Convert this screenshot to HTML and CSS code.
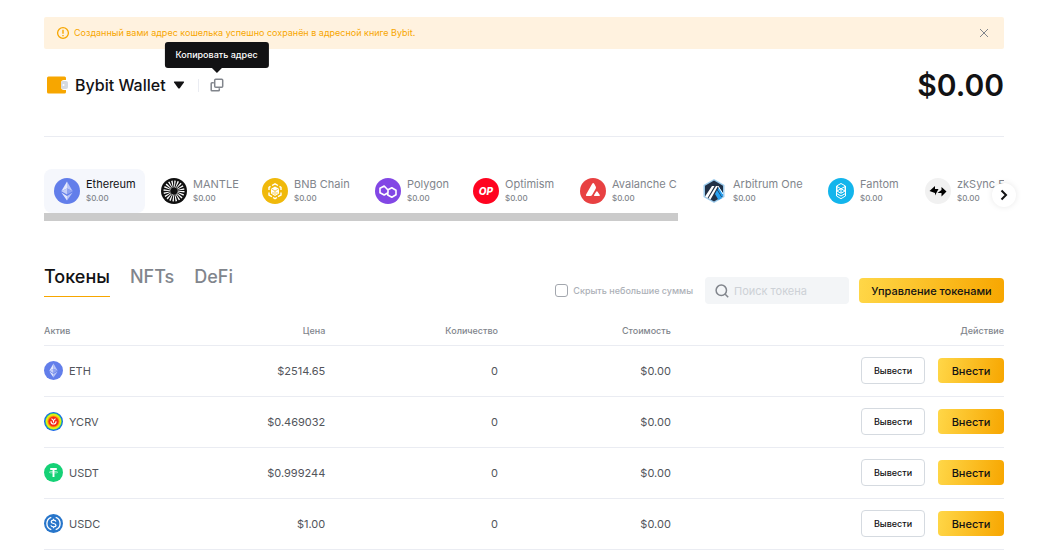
FILE: index.html
```html
<!DOCTYPE html>
<html lang="ru">
<head>
<meta charset="utf-8">
<title>Bybit Wallet</title>
<link rel="stylesheet" href="styles.css">
</head>
<body>
<svg class="sprite" aria-hidden="true">
  <symbol id="eth" viewBox="0 0 26 26">
    <circle cx="13" cy="13" r="13" fill="#627eea"/>
    <path d="M13 3.5 7.3 13.2 13 10.600z" fill="#e3e8fc"/><path d="M13 3.500 18.700 13.200 13 10.600z" fill="#b9c5f7"/>
    <path d="M7.300 13.200 13 10.600V16.600z" fill="#c5cff8"/><path d="M18.700 13.200 13 10.600V16.600z" fill="#8fa2f0"/>
    <path d="M7.300 14.500 13 17.900V22.500z" fill="#e3e8fc"/><path d="M18.700 14.500 13 17.900V22.500z" fill="#b9c5f7"/>
  </symbol>
</svg>
<main class="page">
  <div class="notice" role="status">
    <svg class="notice-icon" viewBox="0 0 14 14" fill="none" stroke="#f7a600"><circle cx="7" cy="7" r="5.400" stroke-width="1.300"/><path d="M7 3.800V7.800M7 9V10.300" stroke-width="1.400"/></svg>
    <span class="notice-text">Созданный вами адрес кошелька успешно сохранён в адресной книге Bybit.</span>
    <button class="notice-close" aria-label="Закрыть"><svg viewBox="0 0 10 10" fill="none" stroke="#81858c"><path d="M1 1 9 9M9 1 1 9"/></svg></button>
  </div>

  <header class="account">
    <button class="wallet">
      <svg class="wallet-icon" viewBox="0 0 22 18"><rect x="1" y="0.500" width="19" height="17" rx="1.500" fill="#f7a600"/><path d="M18 4h2v10h-2a3 3 0 0 1-3-3V7a3 3 0 0 1 3-3z" fill="#fff"/><rect x="15" y="5" width="7" height="8" rx="2" fill="#d5dae0"/><circle cx="17.500" cy="9" r="1" fill="#fff"/></svg>
      <span>Bybit Wallet</span>
      <svg class="caret" viewBox="0 0 12 8"><path d="M1.500.5h9q1 0 .4.9L6.800 7.200q-.8.8-1.600 0L1.100 1.400Q.5.5 1.500.5z" fill="#121214"/></svg>
    </button>
    <span class="rule"></span>
    <button class="copy" aria-label="Копировать адрес">
      <svg viewBox="0 0 14 14" fill="none" stroke="#81858c" stroke-width="1.500"><rect x="4.700" y="1.200" width="8" height="8" rx="1"/><path d="M3.800 4.700H2a.8.8 0 0 0-.8.8V12a.8.8 0 0 0 .8.800H8.500a.8.8 0 0 0 .8-.8V10.200"/></svg>
      <span class="tooltip" role="tooltip">Копировать адрес</span>
    </button>
    <strong class="balance">$0.00</strong>
  </header>

  <section class="chains">
    <div class="chain-list">
      <button class="chain active"><svg viewBox="0 0 26 26"><use href="#eth"/></svg><span class="label">Ethereum<small>$0.00</small></span></button>
      <button class="chain"><svg viewBox="0 0 26 26"><circle cx="13" cy="13" r="13" fill="#101010"/><circle cx="13" cy="13" r="7" fill="none" stroke="#fff" stroke-width="7" stroke-dasharray="1.050 1.149"/><circle cx="13" cy="13" r="3.300" fill="#101010"/></svg><span class="label">MANTLE<small>$0.00</small></span></button>
      <button class="chain"><svg viewBox="0 0 26 26" fill="none"><circle cx="13" cy="13" r="13" fill="#f0b90b"/><path d="M10 7.500 13 5.800 16 7.500M7 12V9.300L8.500 8.400M19 12V9.300L17.500 8.400M7 14.500V17l3 1.700M19 14.500V17l-3 1.700M11 19.500l2 1.200 2-1.200" stroke="#fff" stroke-width="1.400"/><path d="M9 10.700 13 8.500 17 10.700V15.500L13 18 9 15.500z" fill="#fff"/><path d="m9.500 11 3.500 2 3.500-2M13 13v4M11 14v2M15 14v2" stroke="#f0b90b" stroke-width=".7"/></svg><span class="label">BNB Chain<small>$0.00</small></span></button>
      <button class="chain"><svg viewBox="0 0 26 26" fill="none"><circle cx="13" cy="13" r="13" fill="#8247e5"/><path d="M12.500 11.500 9.200 8 5 10.300V14.700L9.200 17l3.800-2.300V11.800L16.800 9.800 21 12.200V16.800L16.800 19.200 12.800 17V14.500" stroke="#fff" stroke-width="1.600" stroke-linejoin="round"/></svg><span class="label">Polygon<small>$0.00</small></span></button>
      <button class="chain"><svg viewBox="0 0 26 26"><circle cx="13" cy="13" r="13" fill="#ff0420"/><text class="op" x="13" y="17" text-anchor="middle">OP</text></svg><span class="label">Optimism<small>$0.00</small></span></button>
      <button class="chain"><svg viewBox="0 0 26 26" fill="#fff"><circle cx="13" cy="13" r="13" fill="#e84142"/><path d="M12.200 5.800q1-1.600 2 0l1.500 2.700q.6 1.100 0 2.200l-3.600 6.300q-.6 1-1.800 1H7q-1.700 0-.9-1.500zM16 14q.9-1.400 1.800 0l2 3q.5 1.100-.8 1.100h-4.200q-1.300 0-.7-1.100z"/></svg><span class="label">Avalanche C<small>$0.00</small></span></button>
      <button class="chain"><svg viewBox="0 0 26 26"><path d="M13 1 23.500 7V19L13 25 2.500 19V7z" fill="#9dcced"/><path d="M13 2.500 22 7.800V18.200L13 23.500 4 18.200V7.800z" fill="#213147"/><path d="M16 12 21 20 17.500 22 14 16z" fill="#28a0f0"/><path d="m18 9 4 6v3l-1 1-4.500-7.500z" fill="#28a0f0"/><path d="M11 8h2.500L6.500 20 4 18.500zM15 8h2L9.500 21.500 7.500 20.300z" fill="#fff"/><path d="m17 8 5 8" stroke="#fff"/></svg><span class="label">Arbitrum One<small>$0.00</small></span></button>
      <button class="chain"><svg viewBox="0 0 26 26" fill="none"><circle cx="13" cy="13" r="13" fill="#13b5ec"/><path d="m8.500 8 4.500-2.500L17.500 8v10L13 20.700 8.500 18zM9 8.500l4 2.300 4-2.300M9 13l4-2.300 4 2.300M9 8.500V13l4 2.300 4-2.300V8.500M13 10.700V15M9 15.700l4 2.300 4-2.300" stroke="#fff"/></svg><span class="label">Fantom<small>$0.00</small></span></button>
      <button class="chain"><svg viewBox="0 0 26 26"><circle cx="13" cy="13" r="13" fill="#f1f1f1"/><path d="m4.500 13 5.500-5v3h3.500L10 17.500V15zM21.500 13.500l-5-4.500v3L12.500 15h4v3.500z" fill="#000"/></svg><span class="label">zkSync E<small>$0.00</small></span></button>
    </div>
    <div class="scroll"></div>
    <button class="next" aria-label="Далее"><svg viewBox="0 0 10 12" fill="none" stroke="#121214" stroke-width="2"><path d="M2.500 1.500 7 6 2.500 10.500"/></svg></button>
  </section>

  <div class="toolbar">
    <nav class="tabs"><button class="tab selected">Токены</button><button class="tab">NFTs</button><button class="tab">DeFi</button></nav>
    <div class="filters">
      <label class="hide"><input type="checkbox"><span>Скрыть небольшие суммы</span></label>
      <label class="search"><svg viewBox="0 0 14 14" fill="none" stroke="#81858c" stroke-width="1.500"><circle cx="6.300" cy="6.300" r="5.200"/><path d="m10.200 10.200 3 3"/></svg><input type="text" placeholder="Поиск токена" aria-label="Поиск токена"></label>
      <button class="primary manage">Управление токенами</button>
    </div>
  </div>

  <table class="tokens">
    <colgroup><col class="c-price"><col class="c-num"><col class="c-num"><col></colgroup>
    <thead><tr><th><div class="asset-cell"><span>Актив</span><span>Цена</span></div></th><th>Количество</th><th>Стоимость</th><th>Действие</th></tr></thead>
    <tbody>
      <tr><td><div class="asset-cell"><span class="asset"><svg viewBox="0 0 26 26"><use href="#eth"/></svg>ETH</span><span>$2514.65</span></div></td><td>0</td><td>$0.00</td><td><div class="actions"><button class="outline">Вывести</button><button class="primary">Внести</button></div></td></tr>
      <tr><td><div class="asset-cell"><span class="asset"><svg viewBox="0 0 26 26"><circle cx="13" cy="13" r="13" fill="#1765e8"/><circle cx="13" cy="13" r="11.500" fill="#35d56b"/><circle cx="13" cy="13" r="10.600" fill="#e6ec16"/><circle cx="13" cy="13" r="8.300" fill="#ff9e0a"/><circle cx="13" cy="13" r="7" fill="#f52a18"/><path d="M10.300 9 13 11.700 15.700 9M13 11.500v3M9.500 12.500q0 4 3.500 4t3.500-4" fill="none" stroke="#fff" stroke-width="1.500"/></svg>YCRV</span><span>$0.469032</span></div></td><td>0</td><td>$0.00</td><td><div class="actions"><button class="outline">Вывести</button><button class="primary">Внести</button></div></td></tr>
      <tr><td><div class="asset-cell"><span class="asset"><svg viewBox="0 0 26 26"><circle cx="13" cy="13" r="13" fill="#15d176"/><path d="M8.500 7h9v2.500h-3.200V19h-2.600V9.500H8.500z" fill="#fff"/><ellipse cx="13" cy="12.600" rx="5.800" ry="1.100" fill="none" stroke="#fff" stroke-width=".7"/></svg>USDT</span><span>$0.999244</span></div></td><td>0</td><td>$0.00</td><td><div class="actions"><button class="outline">Вывести</button><button class="primary">Внести</button></div></td></tr>
      <tr><td><div class="asset-cell"><span class="asset"><svg viewBox="0 0 26 26" fill="none" stroke="#fff"><circle cx="13" cy="13" r="13" fill="#2775ca" stroke="none"/><path d="M10 4.500a9 9 0 0 0 0 17M16 4.500a9 9 0 0 1 0 17" stroke-width="1.800"/><path d="M16.300 10.500q-.5-2-3.300-2t-3.200 2.200q0 1.900 3.200 2.300t3.400 2.400q-.2 2.200-3.400 2.200t-3.500-2.200M13 6.500v2M13 17.500v2" stroke-width="1.700"/></svg>USDC</span><span>$1.00</span></div></td><td>0</td><td>$0.00</td><td><div class="actions"><button class="outline">Вывести</button><button class="primary">Внести</button></div></td></tr>
    </tbody>
  </table>
</main>
</body>
</html>
```
FILE: styles.css
```css
* { box-sizing: border-box; }
body { margin: 0; background: #fff; color: #121214; font: 11px/16px Inter, "Noto Sans", sans-serif; }
button { margin: 0; padding: 0; border: 0; background: none; color: inherit; font: inherit; cursor: pointer; }
svg { display: block; flex: none; }
.sprite { position: absolute; width: 0; height: 0; }
.page { padding: 17px 33px 0 44px; }

.notice { display: flex; align-items: center; gap: 4px; height: 32px; padding: 0 14px 0 12px; border-radius: 2px; background: #fff2df; color: #f7a600; font-size: 9px; }
.notice-icon { width: 14px; height: 14px; }
.notice-text { flex: 1; }
.notice-close { padding: 1px; }
.notice-close svg { width: 10px; height: 10px; }

.account { display: flex; align-items: center; height: 88px; padding-bottom: 15px; border-bottom: 1px solid #eaecf2; }
.wallet { display: flex; align-items: center; gap: 7px; padding-left: 2px; font-size: 16px; font-weight: 500; }
.wallet-icon { width: 22px; height: 18px; }
.caret { width: 12px; height: 8px; }
.rule { width: 1px; height: 13px; margin: 0 11px 0 13px; background: #eaecf2; }
.copy { position: relative; }
.copy > svg { width: 14px; height: 14px; }
.tooltip { position: absolute; bottom: 24px; left: 50%; transform: translateX(-50%); padding: 5px 11px; border-radius: 3px; background: #121214; color: #fff; font-size: 9px; font-weight: 500; white-space: nowrap; }
.tooltip::after { content: ""; position: absolute; top: 100%; left: 50%; margin-left: -5px; border: 5px solid transparent; border-top-color: #121214; border-bottom: 0; }
.balance { margin-left: auto; font-size: 30px; line-height: 40px; font-weight: 600; }

.chains { position: relative; padding-top: 32px; }
.chain-list { display: grid; grid-template-columns: 101px 95px 107px 92px 101px 115px 121px 91px 101px; gap: 6px; overflow: hidden; }
.chain { display: flex; align-items: center; gap: 6px; height: 44px; padding: 0 10px; border-radius: 8px; color: #81858c; text-align: left; white-space: nowrap; }
.chain svg { width: 26px; height: 26px; }
.chain.active { background: #f5f7fc; color: #121214; }
.label { line-height: 14px; }
.label small { display: block; color: #81858c; font-size: 8px; font-weight: 500; }
.op { fill: #fff; font: italic 800 10px Inter, sans-serif; }
.scroll { width: 66%; height: 8px; background: #cbcbcb; }
.next { position: absolute; top: 46px; right: -12px; display: grid; place-items: center; width: 24px; height: 24px; border-radius: 50%; background: #fff; box-shadow: 0 0 6px #12121418; }
.next svg { width: 10px; height: 12px; }

.toolbar { display: flex; justify-content: space-between; padding-top: 42px; }
.tabs { display: flex; align-items: flex-start; gap: 20px; }
.tab { height: 34px; padding-bottom: 5px; border-bottom: 1px solid transparent; color: #81858c; font-size: 18px; line-height: 28px; font-weight: 500; }
.tab.selected { border-color: #f7a600; color: #121214; }
.filters { display: flex; align-items: center; gap: 10px; height: 27px; margin-top: 14px; }
.hide { display: flex; align-items: center; gap: 5px; margin-right: 2px; color: #adb1b8; font-size: 9px; font-weight: 500; }
.hide input { appearance: none; width: 13px; height: 13px; margin: 0; border: 1px solid #a3a7ae; border-radius: 3px; }
.search { display: flex; align-items: center; gap: 5px; width: 144px; height: 27px; padding: 0 10px; border-radius: 4px; background: #f3f5f7; }
.search svg { width: 14px; height: 14px; }
.search input { width: 100%; min-width: 0; padding: 0; border: 0; outline: 0; background: none; font: inherit; }
.search input::placeholder { color: #cdd1d6; }
.primary { height: 25px; padding: 0 12px; border-radius: 4px; background: linear-gradient(100deg, #ffd748, #f7a600); font-weight: 500; white-space: nowrap; }
.manage { min-width: 145px; }

.tokens { width: 100%; margin-top: 13px; table-layout: fixed; border-collapse: collapse; }
.c-price { width: 29.3%; }
.c-num { width: 18%; }
.tokens th, .tokens td { padding: 0; border-bottom: 1px solid #eaecf2; text-align: right; }
.tokens th { height: 28px; color: #81858c; font-size: 9px; font-weight: 500; }
.tokens td { height: 51px; color: #52555b; }
.asset-cell { display: flex; align-items: center; justify-content: space-between; }
.asset { display: flex; align-items: center; gap: 6px; }
.asset svg { width: 19px; height: 19px; }
.actions { display: flex; align-items: center; justify-content: flex-end; gap: 13px; color: #121214; }
.actions .primary { width: 66px; }
.outline { width: 64px; height: 27px; border: 1px solid #d5dae0; border-radius: 4px; font-size: 9px; font-weight: 500; }
```
